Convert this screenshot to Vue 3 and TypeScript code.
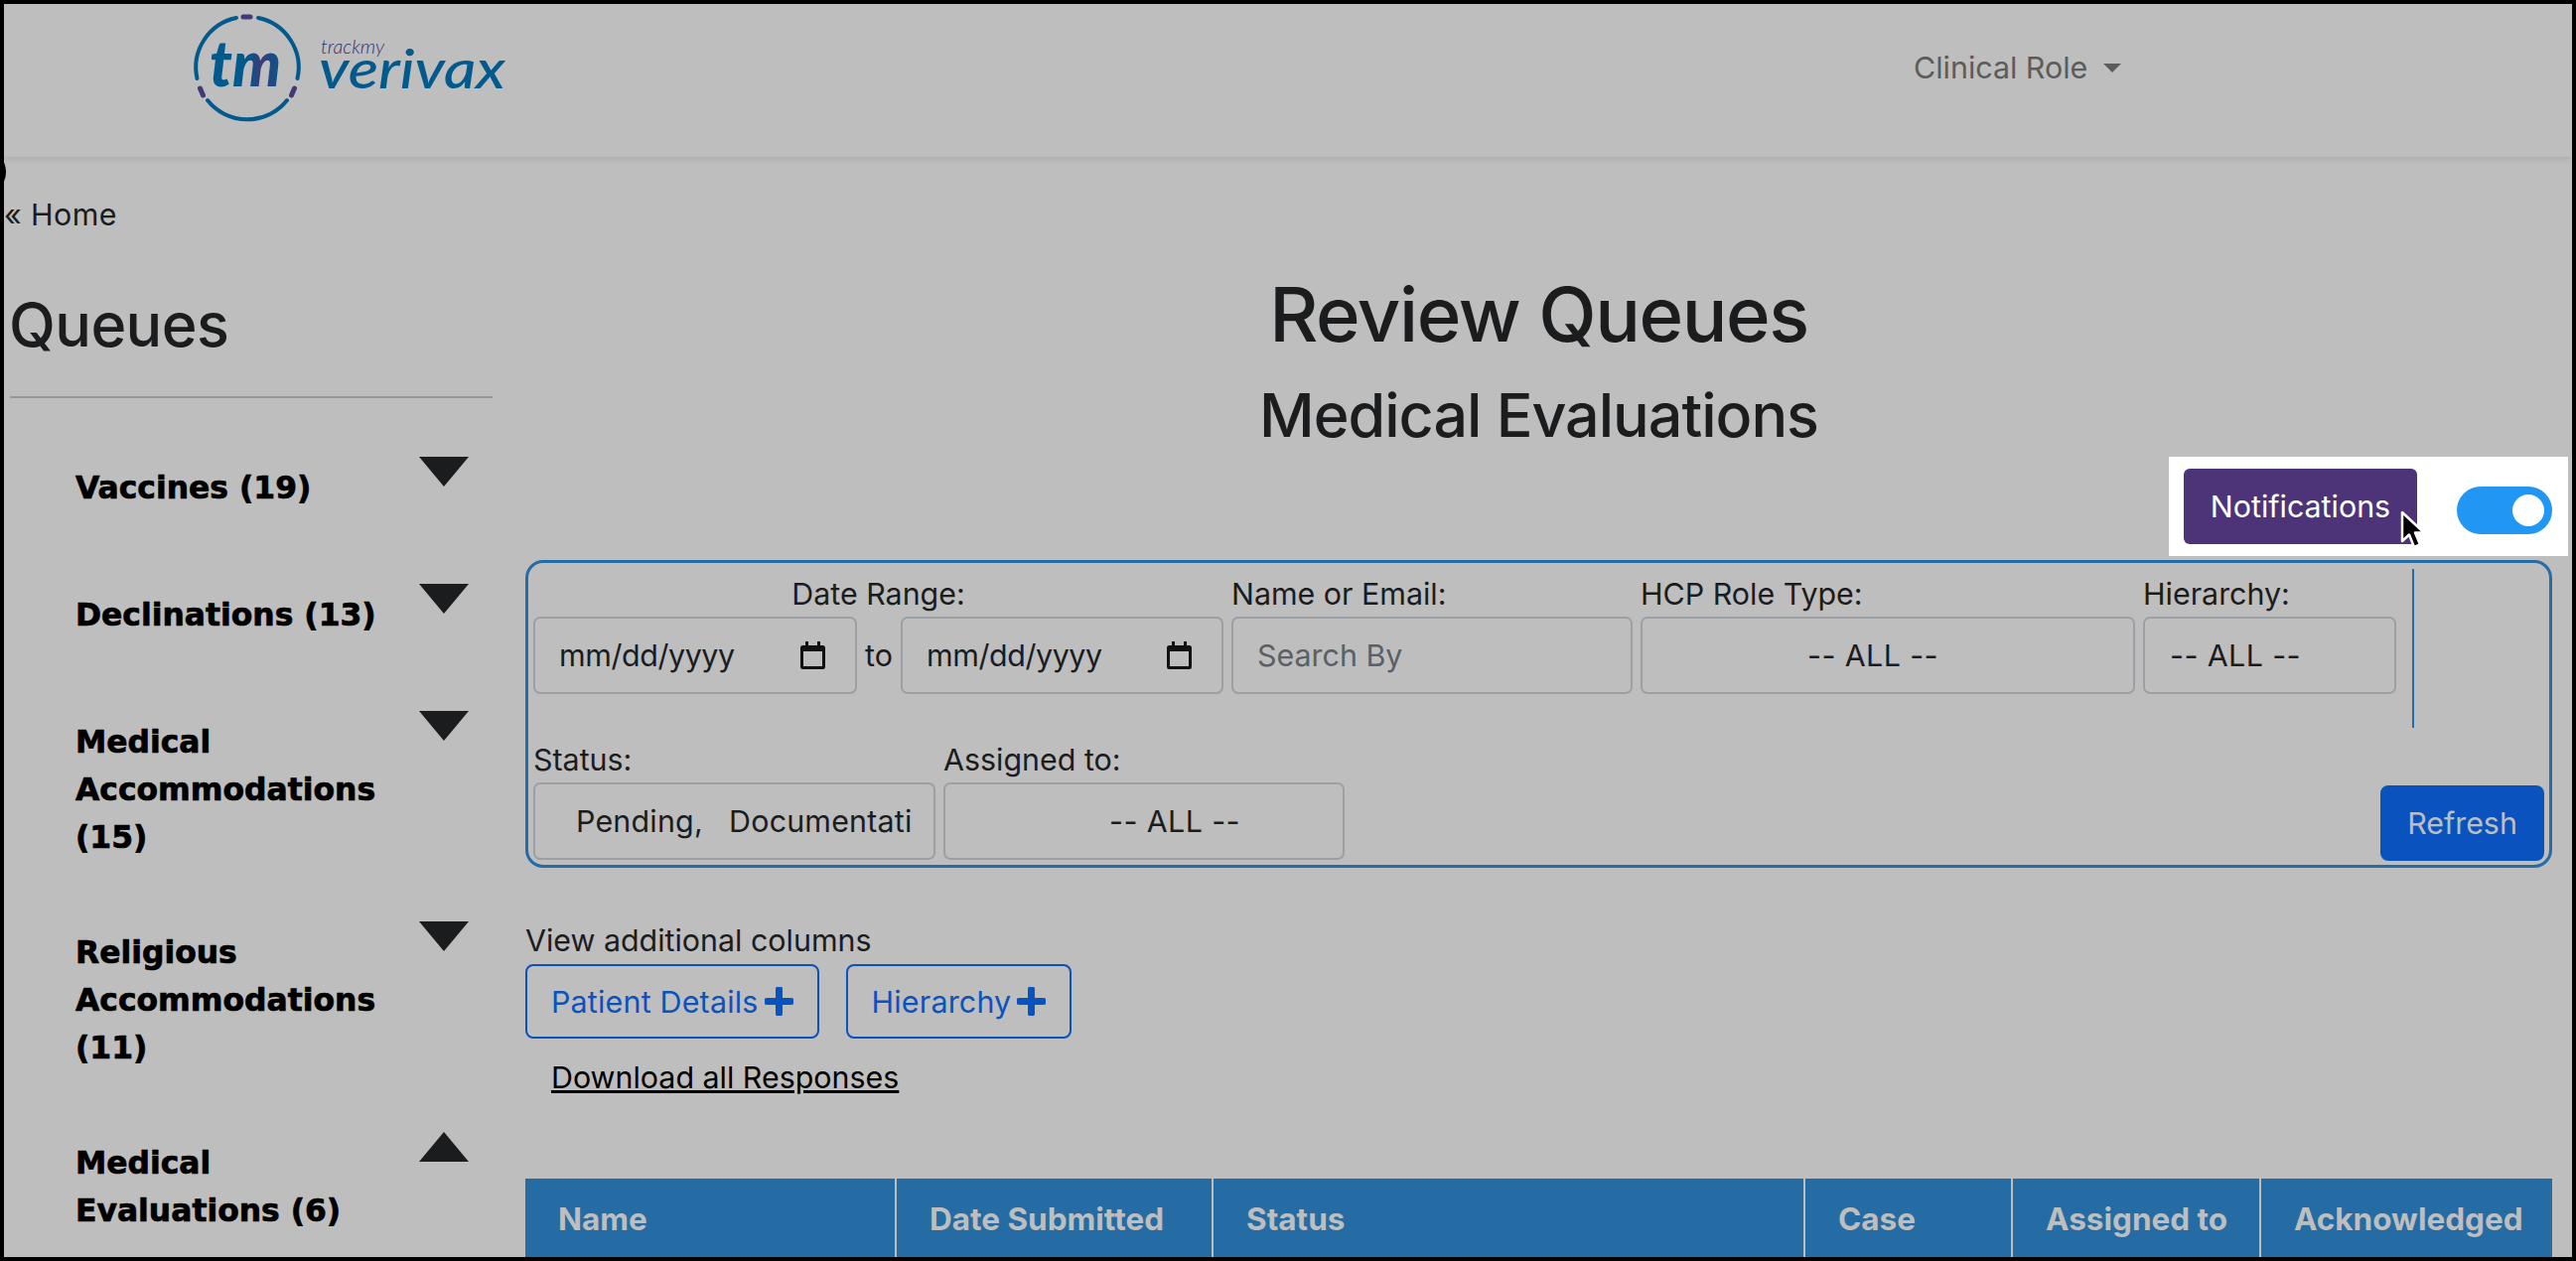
<template>
  <div class="frame">
    <span class="edge-arc" />
    <nav class="navbar">
      <svg class="logo" width="330" height="116" viewBox="0 0 330 116">
        <defs>
          <linearGradient id="tmFill" x1="0" y1="0" x2="1" y2="0">
            <stop offset="0" stop-color="#02598c" />
            <stop offset="0.55" stop-color="#02598c" />
            <stop offset="0.72" stop-color="#40397a" />
            <stop offset="1" stop-color="#02598c" />
          </linearGradient>
        </defs>
        <g fill="none" stroke-width="4" stroke-linecap="round">
          <path d="M48 7A51 51 0 0 0 8.500 68" stroke="#02598c" />
          <path d="M70 7A51 51 0 0 1 109.500 68" stroke="#02598c" />
          <path d="M19 90A51 51 0 0 0 99 90" stroke="#02598c" />
          <path d="M55 6H62" stroke="#40397a" stroke-width="5" />
          <path d="M11.500 78L14.500 85" stroke="#40397a" stroke-width="5" />
          <path d="M106.500 78L103.500 85" stroke="#40397a" stroke-width="5" />
        </g>
        <text class="logo-tm" x="21" y="76" textLength="72" lengthAdjust="spacingAndGlyphs" fill="url(#tmFill)">tm</text>
        <text class="logo-track" x="133" y="43" textLength="64" lengthAdjust="spacingAndGlyphs">trackmy</text>
        <text class="logo-veri" x="131" y="78" textLength="188" lengthAdjust="spacingAndGlyphs">verivax</text>
      </svg>
      <a class="role-link">Clinical Role<span class="caret" /></a>
    </nav>

    <div class="page">
      <aside class="sidebar">
        <a class="home-link">« Home</a>
        <h2 class="queues-title">Queues</h2>
        <hr class="queues-rule" />
        <ul class="queue-list">
          <li v-for="q in queues" :key="q.label" class="queue-item">
            <span class="queue-label">{{ q.label }}</span>
            <span :class="['tri', { up: q.open }]" />
          </li>
        </ul>
      </aside>

      <main class="content">
        <h1 class="title">Review Queues</h1>
        <h2 class="subtitle">Medical Evaluations</h2>

        <div class="notify-row">
          <div class="notify-box">
            <button class="notify-btn">Notifications</button>
            <span class="toggle"><span class="knob" /></span>
            <svg class="cursor" width="26" height="40" viewBox="0 0 26 40">
              <path d="M2 2V31L9 24.500L14 37L20 34.500L15 22.500H24Z" fill="#000" stroke="#fff" stroke-width="2.500" stroke-linejoin="round" />
            </svg>
          </div>
        </div>

        <section class="filters">
          <div class="filter-row top">
            <div class="field">
              <label class="center">Date Range:</label>
              <div class="date-range">
                <div class="control date">mm/dd/yyyy<svg class="cal" width="25" height="28" viewBox="0 0 25 28"><path d="M5 0h3v4h9V0h3v4h2.500A2.500 2.500 0 0 1 25 6.500V25.500A2.500 2.500 0 0 1 22.500 28H2.500A2.500 2.500 0 0 1 0 25.500V6.500A2.500 2.500 0 0 1 2.500 4H5ZM3 10V25H22V10Z" fill="#111" /></svg></div>
                <span class="to">to</span>
                <div class="control date second">mm/dd/yyyy<svg class="cal" width="25" height="28" viewBox="0 0 25 28"><path d="M5 0h3v4h9V0h3v4h2.500A2.500 2.500 0 0 1 25 6.500V25.500A2.500 2.500 0 0 1 22.500 28H2.500A2.500 2.500 0 0 1 0 25.500V6.500A2.500 2.500 0 0 1 2.500 4H5ZM3 10V25H22V10Z" fill="#111" /></svg></div>
              </div>
            </div>
            <div class="field">
              <label>Name or Email:</label>
              <div class="control search">Search By</div>
            </div>
            <div class="field">
              <label>HCP Role Type:</label>
              <div class="control hcp">-- ALL --</div>
            </div>
            <div class="field">
              <label>Hierarchy:</label>
              <div class="control hier">-- ALL --</div>
            </div>
            <span class="divider" />
          </div>
          <div class="filter-row bottom">
            <div class="field">
              <label>Status:</label>
              <div class="control status">Pending,&nbsp;&nbsp; Documentati</div>
            </div>
            <div class="field">
              <label>Assigned to:</label>
              <div class="control assigned">-- ALL --</div>
            </div>
            <button class="refresh-btn">Refresh</button>
          </div>
        </section>

        <p class="columns-label">View additional columns</p>
        <div class="column-btns">
          <button class="column-btn">Patient Details<svg class="plus" width="29" height="29" viewBox="0 0 29 29"><path d="M11 2.500a3.500 3.500 0 0 1 7 0V11H26.500a3.500 3.500 0 0 1 0 7H18V26.500a3.500 3.500 0 0 1-7 0V18H2.500a3.500 3.500 0 0 1 0-7H11Z" fill="#0a53be" /></svg></button>
          <button class="column-btn">Hierarchy<svg class="plus" width="29" height="29" viewBox="0 0 29 29"><path d="M11 2.500a3.500 3.500 0 0 1 7 0V11H26.500a3.500 3.500 0 0 1 0 7H18V26.500a3.500 3.500 0 0 1-7 0V18H2.500a3.500 3.500 0 0 1 0-7H11Z" fill="#0a53be" /></svg></button>
        </div>
        <a class="download-link">Download all Responses</a>

        <table class="queue-table">
          <colgroup>
            <col v-for="c in columns" :key="c.name" :style="{ width: c.width + 'px' }" />
          </colgroup>
          <thead>
            <tr>
              <th v-for="c in columns" :key="c.name">{{ c.name }}</th>
            </tr>
          </thead>
        </table>
      </main>
    </div>
  </div>
</template>

<script setup lang="ts">
interface Queue {
  label: string
  open?: boolean
}

const queues: Queue[] = [
  { label: 'Vaccines (19)' },
  { label: 'Declinations (13)' },
  { label: 'Medical Accommodations (15)' },
  { label: 'Religious Accommodations (11)' },
  { label: 'Medical Evaluations (6)', open: true },
]

const columns = [
  { name: 'Name', width: 373 },
  { name: 'Date Submitted', width: 319 },
  { name: 'Status', width: 596 },
  { name: 'Case', width: 209 },
  { name: 'Assigned to', width: 250 },
  { name: 'Acknowledged', width: 294 },
]
</script>

<style>
html,
body {
  margin: 0;
  background: #000;
}
</style>

<style scoped>
.frame {
  position: relative;
  box-sizing: border-box;
  width: 2594px;
  height: 1270px;
  border: 4px solid #000;
  overflow: hidden;
  background: #bebebe;
  color: #1b1c1e;
  font-family: Inter, "Liberation Sans", sans-serif;
  font-size: 30.400px;
}

.edge-arc {
  position: absolute;
  left: -9px;
  top: 157px;
  width: 11px;
  height: 24px;
  background: #000;
  border-radius: 50%;
}

.navbar {
  display: flex;
  align-items: center;
  height: 154px;
  box-shadow: 0 3px 6px rgba(0, 0, 0, 0.08);
}

.logo {
  flex: none;
  margin-left: 186px;
  margin-top: -24px;
}

.logo-tm {
  font: italic 900 64px Lato, sans-serif;
}

.logo-track {
  font: italic 300 20px Lato, sans-serif;
  fill: #352f6e;
}

.logo-veri {
  font: italic 500 54px Lato, sans-serif;
  fill: #02598c;
}

.role-link {
  display: flex;
  align-items: center;
  margin-left: 1407px;
  margin-top: -26px;
  color: #5c5c5c;
  white-space: nowrap;
}

.caret {
  margin-left: 16px;
  border-top: 9px solid #5c5c5c;
  border-left: 9px solid transparent;
  border-right: 9px solid transparent;
}

.page {
  display: flex;
}

.sidebar {
  flex: none;
  width: 525px;
  box-sizing: border-box;
}

.home-link {
  display: block;
  margin-top: 38px;
  line-height: 40px;
  letter-spacing: 0.4px;
}

.queues-title {
  margin: 54px 0 0 5px;
  font-size: 61px;
  font-weight: 500;
  line-height: 74px;
  letter-spacing: -0.6px;
}

.queues-rule {
  width: 486px;
  height: 2px;
  margin: 35px 0 0 6px;
  border: 0;
  background: #979797;
}

.queue-list {
  list-style: none;
  margin: 59px 0 0;
  padding: 0 0 0 72px;
  width: 396px;
}

.queue-item {
  display: flex;
  justify-content: space-between;
  min-height: 128px;
  padding-bottom: 61px;
  box-sizing: border-box;
}

.queue-label {
  width: 320px;
  padding-top: 7px;
  font-family: "DejaVu Sans", sans-serif;
  font-size: 31.400px;
  font-weight: 700;
  line-height: 48px;
  color: #000;
  -webkit-text-stroke: 0.7px #000;
}

.tri {
  flex: none;
  width: 0;
  height: 0;
  border-left: 25px solid transparent;
  border-right: 25px solid transparent;
  border-top: 30px solid #1b1c1e;
}

.tri.up {
  border-top: 0;
  border-bottom: 30px solid #1b1c1e;
}

.content {
  flex: 1;
  min-width: 0;
  padding-right: 20px;
}

.title {
  margin: 0;
  padding-top: 118px;
  font-size: 76px;
  font-weight: 500;
  line-height: 80px;
  letter-spacing: -1.4px;
  text-align: center;
}

.subtitle {
  margin: 0;
  padding-top: 30px;
  font-size: 61px;
  font-weight: 500;
  line-height: 64px;
  letter-spacing: -1px;
  text-align: center;
}

.notify-row {
  display: flex;
  justify-content: flex-end;
  margin: 10px -16px 4px 0;
}

.notify-box {
  position: relative;
  display: flex;
  align-items: center;
  box-sizing: border-box;
  width: 402px;
  height: 100px;
  padding-left: 15px;
  background: #fff;
}

.notify-btn {
  width: 235px;
  height: 76px;
  border: 0;
  border-radius: 6px;
  background: #4d3478;
  color: #fff;
  font: inherit;
}

.toggle {
  display: flex;
  justify-content: flex-end;
  align-items: center;
  box-sizing: border-box;
  width: 96px;
  height: 48px;
  margin: 8px 0 0 40px;
  padding-right: 8px;
  border-radius: 24px;
  background: #2196f3;
}

.knob {
  width: 32px;
  height: 32px;
  border-radius: 50%;
  background: #fff;
}

.cursor {
  position: absolute;
  left: 233px;
  top: 54px;
}

.filters {
  box-sizing: border-box;
  height: 310px;
  padding: 6px 5px 5px 5px;
  border: 3px solid #256ba4;
  border-radius: 18px;
}

.filter-row {
  display: flex;
  gap: 8px;
}

.filter-row.top {
  height: 160px;
  box-sizing: border-box;
  padding-top: 5px;
}

.filter-row.bottom {
  margin-top: 12px;
}

.field {
  display: flex;
  flex-direction: column;
}

.field label {
  height: 43px;
  line-height: 40px;
}

.field label.center {
  text-align: center;
}

.date-range {
  display: flex;
  align-items: center;
  gap: 8px;
}

.control {
  display: flex;
  align-items: center;
  box-sizing: border-box;
  height: 78px;
  border: 2px solid #9c9fa3;
  border-radius: 7px;
  white-space: pre;
  overflow: hidden;
}

.date {
  position: relative;
  width: 326px;
  padding-left: 24px;
  letter-spacing: -0.4px;
}

.date.second {
  width: 325px;
}

.cal {
  position: absolute;
  right: 30px;
  top: 23px;
}

.to {
  width: 28px;
}

.search {
  width: 404px;
  padding-left: 24px;
  color: #5a6066;
}

.hcp {
  width: 498px;
  padding-left: 166px;
  letter-spacing: 0.4px;
}

.hier {
  width: 255px;
  padding-left: 25px;
  letter-spacing: 0.4px;
}

.status {
  width: 405px;
  padding-left: 41px;
  letter-spacing: 0.2px;
}

.assigned {
  width: 404px;
  padding-left: 165px;
  letter-spacing: 0.4px;
}

.divider {
  width: 2px;
  margin: -5px 0 0 8px;
  background: #256ba4;
}

.refresh-btn {
  align-self: flex-end;
  width: 165px;
  height: 76px;
  margin-left: auto;
  margin-bottom: -1px;
  border: 0;
  border-radius: 8px;
  background: #0a53be;
  color: #bebebe;
  font: inherit;
}

.columns-label {
  margin: 53px 0 0;
  line-height: 40px;
}

.column-btns {
  display: flex;
  gap: 27px;
  margin-top: 4px;
}

.column-btn {
  display: flex;
  align-items: center;
  gap: 6px;
  height: 75px;
  padding: 0 24px;
  border: 2px solid #0a53be;
  border-radius: 8px;
  background: none;
  color: #0a53be;
  font: inherit;
  letter-spacing: 0.2px;
}

.download-link {
  display: block;
  margin: 19px 0 0 26px;
  color: #000;
  line-height: 40px;
  text-decoration: underline;
}

.queue-table {
  width: 2041px;
  margin: 82px 0 0;
  border-collapse: collapse;
  table-layout: fixed;
}

.queue-table th {
  height: 80px;
  box-sizing: border-box;
  padding: 0 0 0 33px;
  border-left: 2px solid #bebebe;
  background: #256ba4;
  color: #bebebe;
  font-size: 31.500px;
  font-weight: 700;
  text-align: left;
}

.queue-table th:first-child {
  border-left: 0;
}
</style>
